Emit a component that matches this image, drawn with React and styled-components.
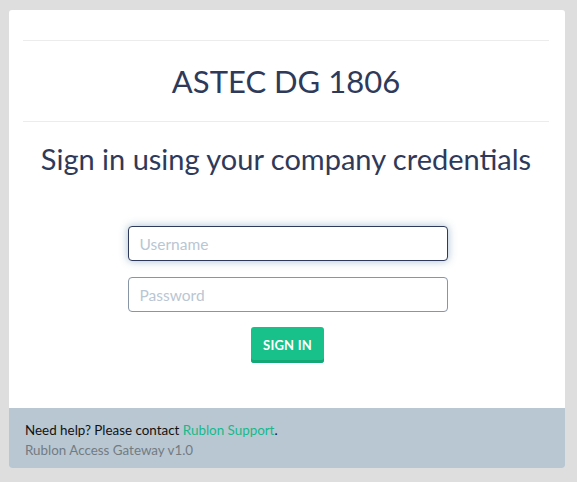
import React from "react";
import styled, { createGlobalStyle } from "styled-components";

const Global = createGlobalStyle`
  html, body {
    margin: 0;
    padding: 0;
    background: #dedede;
    font-family: "Lato", "Open Sans", sans-serif;
  }
`;

const Page = styled.div`
  padding: 10px 12px 14px 9px;
`;

const Card = styled.div`
  background: #fff;
  border-radius: 3px;
  overflow: hidden;
`;

const Body = styled.div`
  padding: 30px 16px 0 14px;
`;

const Rule = styled.hr`
  margin: 0;
  border: 0;
  border-top: 1px solid #ececec;
`;

const Title = styled.h1`
  margin: 0;
  height: 80px;
  display: flex;
  align-items: center;
  justify-content: center;
  font-size: 31px;
  font-weight: 400;
  color: #2f3a5a;
`;

const Subtitle = styled.h2`
  margin: 20px 0 0;
  height: 34px;
  line-height: 34px;
  text-align: center;
  font-size: 29px;
  font-weight: 400;
  color: #2f3a5a;
`;

const Form = styled.form`
  display: flex;
  flex-direction: column;
  align-items: center;
  gap: 16px;
  padding: 50px 0 45px 3px;
`;

const Input = styled.input`
  box-sizing: border-box;
  width: 320px;
  height: 35px;
  padding: 0 11px;
  border-radius: 4px;
  font-family: inherit;
  font-size: 15.5px;
  color: #2f3a5a;
  background: #fff;
  border: 1px solid ${(p) => (p.$focused ? "#2f3a5a" : "#8795a4")};
  box-shadow: ${(p) => (p.$focused ? "0 0 8px rgba(60, 110, 150, 0.45)" : "none")};
  outline: none;
  &::placeholder {
    color: #b9c6d3;
  }
`;

const Button = styled.button`
  margin-top: -1px;
  height: 36px;
  padding: 0 12px;
  border: 0;
  border-radius: 3px;
  background: #19c18a;
  box-shadow: inset 0 -3px 0 #14a877;
  color: #fff;
  font-family: inherit;
  font-weight: 700;
  font-size: 13px;
  letter-spacing: 0.2px;
  text-transform: uppercase;
`;

const Footer = styled.div`
  background: #b9c7d2;
  height: 60px;
  box-sizing: border-box;
  padding: 12px 16px 0;
  font-size: 13.4px;
  line-height: 20px;
`;

const Help = styled.div`
  color: #111;
`;

const Link = styled.a`
  color: #17b989;
  text-decoration: none;
`;

const Version = styled.div`
  color: #737b82;
`;

export default function App() {
  return (
    <Page>
      <Global />
      <Card>
        <Body>
          <Rule />
          <Title>ASTEC DG 1806</Title>
          <Rule />
          <Subtitle>Sign in using your company credentials</Subtitle>
          <Form onSubmit={(e) => e.preventDefault()}>
            <Input $focused placeholder="Username" />
            <Input type="password" placeholder="Password" />
            <Button type="submit">Sign in</Button>
          </Form>
        </Body>
        <Footer>
          <Help>
            Need help? Please contact <Link href="#">Rublon Support</Link>.
          </Help>
          <Version>Rublon Access Gateway v1.0</Version>
        </Footer>
      </Card>
    </Page>
  );
}
